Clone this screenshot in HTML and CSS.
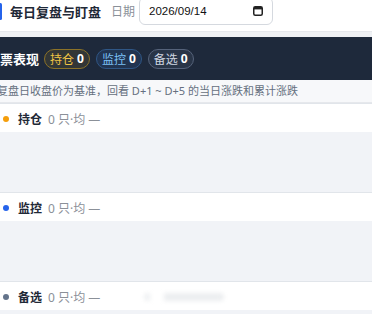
FILE: index.html
```html
<!DOCTYPE html>
<html lang="zh-CN">
<head>
<meta charset="utf-8">
<title>每日复盘与盯盘</title>
<link rel="stylesheet" href="styles.css">
</head>
<body>
<div class="page">
  <header class="topbar">
    <div class="topbar-row">
      <h1 class="title">每日复盘与盯盘</h1>
      <span class="date-label">日期</span>
      <div class="date-input">
        <span class="date-value">2026/09/14</span>
        <svg class="cal" width="10" height="10" viewBox="0 0 10 10" aria-hidden="true">
          <rect x="0.75" y="0.75" width="8.5" height="8.5" rx="1.5" fill="none" stroke="#222" stroke-width="1.5"/>
          <rect x="1" y="1" width="8" height="2.4" fill="#222"/>
        </svg>
      </div>
    </div>
  </header>

  <section class="card">
    <div class="card-head">
      <h2 class="card-title">股票表现</h2>
      <span class="badge hold">持仓 <b>0</b></span>
      <span class="badge watch">监控 <b>0</b></span>
      <span class="badge cand">备选 <b>0</b></span>
    </div>
    <p class="desc">以复盘日收盘价为基准，回看 D+1 ~ D+5 的当日涨跌和累计涨跌</p>

    <div class="group">
      <div class="group-head">
        <span class="dot dot-hold"></span>
        <span class="g-name">持仓</span>
        <span class="g-meta">0 只·均 —</span>
      </div>
      <div class="group-body"></div>
    </div>

    <div class="group">
      <div class="group-head">
        <span class="dot dot-watch"></span>
        <span class="g-name">监控</span>
        <span class="g-meta">0 只·均 —</span>
      </div>
      <div class="group-body"></div>
    </div>

    <div class="group">
      <div class="group-head">
        <span class="dot dot-cand"></span>
        <span class="g-name">备选</span>
        <span class="g-meta">0 只·均 —</span>
        <span class="ghost"></span>
      </div>
      <div class="group-body"></div>
    </div>
  </section>
</div>
</body>
</html>
```
FILE: styles.css
```css
html, body {
  margin: 0;
  padding: 0;
}
body {
  width: 372px;
  height: 314px;
  overflow: hidden;
  background: #eff1f4;
  font-family: "Noto Sans", "Noto Sans CJK SC", sans-serif;
}
.page {
  display: flow-root;
  width: 372px;
}

/* top bar */
.topbar {
  margin-top: -4px;
  padding-bottom: 5px;
  background: #fff;
  border-bottom: 1px solid #e6e8ec;
}
.topbar-row {
  display: flex;
  align-items: center;
  height: 30px;
}
.title {
  margin: 0 0 0 -1px;
  display: flex;
  align-items: center;
  gap: 8px;
  font-size: 13px;
  font-weight: 700;
  color: #1f2937;
  white-space: nowrap;
}
.title::before {
  content: "";
  width: 3px;
  height: 17px;
  border-radius: 2px;
  background: #2563eb;
}
.date-label {
  margin-left: 10px;
  font-size: 12px;
  color: #8a9099;
  white-space: nowrap;
}
.date-input {
  margin-left: 4px;
  width: 134px;
  height: 28px;
  box-sizing: border-box;
  border: 1px solid #d5d9df;
  border-radius: 6px;
  background: #fff;
  display: flex;
  align-items: center;
  justify-content: space-between;
  padding: 0 9px 0 9px;
}
.date-value {
  font-family: "Liberation Sans", sans-serif;
  font-size: 11.5px;
  color: #111;
}
.cal {
  display: block;
}

/* card */
.card {
  margin-top: 5px;
  margin-left: -14px;
  width: 386px;
}
.card-head {
  height: 43px;
  background: #1e293b;
  display: flex;
  align-items: center;
  gap: 6px;
  padding-left: 1px;
}
.card-title {
  margin: 0 -1px 0 0;
  font-size: 13px;
  font-weight: 700;
  color: #fff;
  white-space: nowrap;
}
.badge {
  height: 20px;
  box-sizing: border-box;
  padding: 0 5px;
  border: 1px solid;
  border-radius: 10px;
  font-size: 12px;
  display: inline-flex;
  align-items: center;
  gap: 3px;
  white-space: nowrap;
}
.badge b {
  color: #fff;
  font-weight: 700;
}
.badge.hold {
  border-color: #8b7228;
  background: rgba(234, 179, 8, 0.1);
  color: #f0c445;
}
.badge.watch {
  border-color: #2f5685;
  background: rgba(59, 130, 246, 0.12);
  color: #7cc0f5;
}
.badge.cand {
  border-color: #55627a;
  background: rgba(148, 163, 184, 0.1);
  color: #cfd6e0;
}
.desc {
  margin: 0;
  height: 22px;
  line-height: 22px;
  background: #f7f8fa;
  border-bottom: 1px solid #e6e8ec;
  font-size: 11px;
  color: #667080;
  white-space: nowrap;
}

/* groups */
.group {
  border-top: 1px solid #e1e5ea;
}
.group-head {
  height: 28px;
  box-sizing: border-box;
  padding: 2px 0 0 17px;
  background: #fff;
  display: flex;
  align-items: center;
}
.dot {
  width: 6px;
  height: 6px;
  border-radius: 50%;
  margin-right: 9px;
}
.dot-hold { background: #f59e0b; }
.dot-watch { background: #2563eb; }
.dot-cand { background: #64748b; }
.g-name {
  font-size: 12px;
  font-weight: 700;
  color: #1f2937;
  margin-right: 6px;
}
.g-meta {
  font-size: 12px;
  color: #8b9098;
  white-space: nowrap;
}
.group-body {
  height: 60px;
  background: #f1f3f7;
}
.ghost {
  margin-left: 44px;
  width: 80px;
  height: 8px;
  border-radius: 4px;
  background: linear-gradient(90deg, #eef0f2 0 6px, transparent 6px 20px, #eceef0 20px);
  filter: blur(2px);
}
```
